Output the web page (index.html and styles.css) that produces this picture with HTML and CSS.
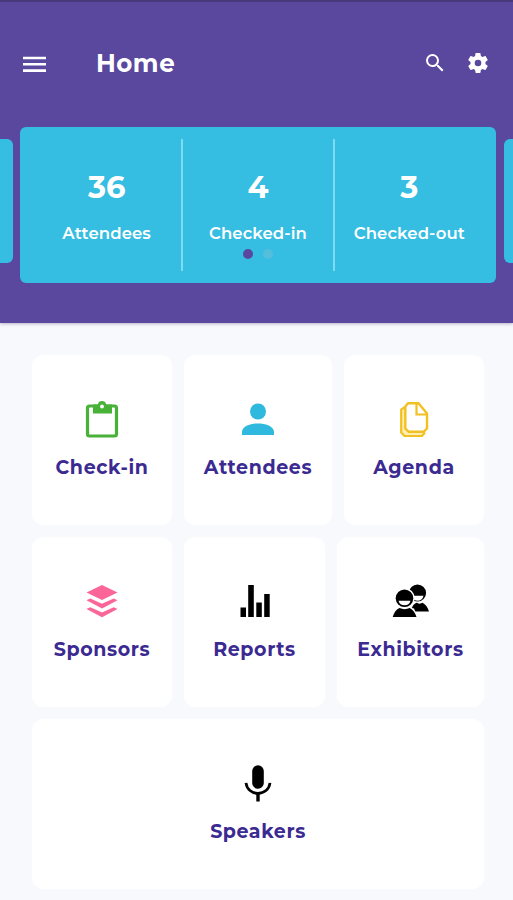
FILE: index.html
```
<!DOCTYPE html>
<html lang="en">

<head>
    <meta charset="utf-8">
    <meta name="viewport" content="width=device-width, initial-scale=1">
    <title>Home</title>
    <link rel="stylesheet" href="styles.css">
</head>

<body>
    <header class="header">
        <div class="toolbar">
            <svg class="icon-menu" width="23" height="17" viewBox="0 0 23 17">
                <path d="M0 2h23M0 8.3h23M0 14.6h23" fill="none" stroke="#fff" stroke-width="2.6" />
            </svg>
            <h1 class="title">Home</h1>
            <svg class="icon-search" width="24" height="24" viewBox="0 0 24 24">
                <path d="M15.5 14h-.79l-.28-.27A6.471 6.471 0 0 0 16 9.5 6.5 6.5 0 1 0 9.5 16c1.61 0 3.09-.59 4.23-1.57l.27.28v.79l5 4.99L20.49 19l-4.99-5zm-6 0C7.01 14 5 11.99 5 9.5S7.01 5 9.5 5 14 7.01 14 9.5 11.99 14 9.5 14z" fill="#fff" />
            </svg>
            <svg class="icon-settings" width="24" height="24" viewBox="0 0 24 24">
                <path d="M19.43 12.98c.04-.32.07-.64.07-.98s-.03-.66-.07-.98l2.11-1.65c.19-.15.24-.42.12-.64l-2-3.46c-.12-.22-.39-.3-.61-.22l-2.49 1c-.52-.4-1.08-.73-1.69-.98l-.38-2.65A.488.488 0 0 0 14 2h-4c-.25 0-.46.18-.49.42l-.38 2.65c-.61.25-1.17.59-1.69.98l-2.49-1c-.23-.09-.49 0-.61.22l-2 3.46c-.13.22-.07.49.12.64l2.11 1.65c-.04.32-.07.65-.07.98s.03.66.07.98l-2.11 1.65c-.19.15-.24.42-.12.64l2 3.46c.12.22.39.3.61.22l2.49-1c.52.4 1.08.73 1.69.98l.38 2.65c.03.24.24.42.49.42h4c.25 0 .46-.18.49-.42l.38-2.65c.61-.25 1.17-.59 1.69-.98l2.49 1c.23.09.49 0 .61-.22l2-3.46c.12-.22.07-.49-.12-.64l-2.11-1.65zM12 15.300a3.300 3.300 0 1 1 0-6.600 3.300 3.300 0 0 1 0 6.600z" fill="#fff" />
            </svg>
        </div>

        <div class="carousel">
            <div class="peek peek-left"></div>
            <div class="stats">
                <div class="stat">
                    <div class="stat-value">36</div>
                    <div class="stat-label">Attendees</div>
                </div>
                <div class="stat">
                    <div class="stat-value">4</div>
                    <div class="stat-label">Checked-in</div>
                </div>
                <div class="stat">
                    <div class="stat-value">3</div>
                    <div class="stat-label">Checked-out</div>
                </div>
                <div class="dots">
                    <span class="dot active"></span>
                    <span class="dot"></span>
                </div>
            </div>
            <div class="peek peek-right"></div>
        </div>
    </header>

    <main class="menu">
        <div class="row row-first">
            <a class="tile">
                <svg class="tile-icon" width="40" height="40" viewBox="0 0 40 40">
                    <rect x="5.500" y="7" width="29" height="30" rx="2" fill="none" stroke="#48b238" stroke-width="3.200" />
                    <path d="M11 5.500h4.800a4.300 4.300 0 0 1 8.400 0H30v9H11z" fill="#48b238" />
                    <circle cx="20" cy="7.500" r="1.900" fill="#fff" />
                </svg>
                <span class="tile-label">Check-in</span>
            </a>
            <a class="tile">
                <svg class="tile-icon" width="40" height="40" viewBox="0 0 40 40">
                    <circle cx="20" cy="12.500" r="8" fill="#2fb9de" />
                    <path d="M4 36v-3c0-6 9-8.500 16-8.500S36 27 36 33v3z" fill="#2fb9de" />
                </svg>
                <span class="tile-label">Attendees</span>
            </a>
            <a class="tile">
                <svg class="tile-icon" width="40" height="40" viewBox="0 0 40 40">
                    <path d="M11 8 7.200 10.500v23l3.300 3.500h17.500l3-3.500" fill="#fff0b0" stroke="#f2c022" stroke-width="2.200" />
                    <path d="M14 4.300h10.500L33 14.500V29.500l-3.200 3.200H14.500l-3.200-3.200V7.500z" fill="#fff" stroke="#f2c022" stroke-width="2.400" stroke-linejoin="round" />
                    <path d="M22.500 4.500v11H33" fill="none" stroke="#f2c022" stroke-width="2.200" />
                </svg>
                <span class="tile-label">Agenda</span>
            </a>
        </div>

        <div class="row row-second">
            <a class="tile">
                <svg class="tile-icon" width="40" height="40" viewBox="0 0 40 40">
                    <g fill="#fb6597">
                        <path d="M20 4l15.500 7.500L20 19 4.500 11.500z" />
                        <path d="M4.500 19.300l3.800-1.800L20 22.800l11.700-5.300 3.800 1.800L20 27.500z" />
                        <path d="M4.500 28l3.800-1.800L20 31.500l11.700-5.300 3.800 1.800L20 36.200z" />
                    </g>
                </svg>
                <span class="tile-label">Sponsors</span>
            </a>
            <a class="tile">
                <svg class="tile-icon" width="40" height="40" viewBox="0 0 40 40">
                    <path d="M5.500 26.500h5.500V36H5.500zM13.200 4h5.600v32h-5.600zM21.300 21.500h5.500V36h-5.500zM29.200 13h5.500v23h-5.500z" />
                </svg>
                <span class="tile-label">Reports</span>
            </a>
            <a class="tile">
                <svg class="tile-icon" width="40" height="40" viewBox="0 0 40 40">
                    <circle cx="26.500" cy="12" r="8.600" />
                    <path d="M21 14.800h11.500c-.6 3.400-3 5-5.800 5s-5.200-1.600-5.700-5z" fill="#fff" />
                    <path d="M20 30.500c1-6 3.500-8.200 6-8.700 1.800 1.200 4 1 5.500 0 3 1.500 5.200 4.500 6.500 8.700z" />
                    <circle cx="13.500" cy="17.300" r="10.300" fill="#fff" />
                    <path d="M0 37.500l4-10 10-2 9 2 4 10z" fill="#fff" />
                    <circle cx="13.500" cy="17.300" r="8.800" />
                    <path d="M7.500 19.800h12c-.6 3.200-3 4.400-6 4.400s-5.400-1.200-6-4.400z" fill="#fff" />
                    <path d="M1.700 36c1.200-4.500 3.700-7.700 6.800-9 3.200 1.500 7 1.500 10.200 0 3.200 1.500 5.500 4.500 6.800 9z" />
                </svg>
                <span class="tile-label">Exhibitors</span>
            </a>
        </div>

        <div class="row">
            <a class="tile">
                <svg class="tile-icon" width="40" height="40" viewBox="0 0 40 40">
                    <rect x="14.200" y="2.300" width="11.600" height="23.500" rx="5.800" />
                    <path d="M8 19.800c.8 6.500 5.800 10.500 12 10.500s11.200-4 12-10.500" fill="none" stroke="#000" stroke-width="2.700" />
                    <path d="M20 30v8.500" stroke="#000" stroke-width="3.400" />
                </svg>
                <span class="tile-label">Speakers</span>
            </a>
        </div>
    </main>
</body>

</html>
```
FILE: styles.css
```
* {
    box-sizing: border-box;
}

body {
    margin: 0;
    height: 900px;
    overflow: hidden;
    background: #f7f9fd;
    font-family: Montserrat, Inter, sans-serif;
}

.header {
    height: 323px;
    background: #59489e;
    border-top: 2px solid #46397c;
    box-shadow: 0 1px 3px rgba(70, 50, 110, 0.35);
}

.toolbar {
    display: flex;
    align-items: center;
    height: 125px;
    padding: 0 23px 3px;
}

.icon-menu {
    margin-top: 2px;
}

.title {
    flex: 1;
    margin: 0 0 0 50px;
    color: #fff;
    font-size: 24.5px;
    line-height: 30px;
    font-weight: 700;
    letter-spacing: 0.5px;
}

.icon-search {
    margin-right: 19px;
}

/* carousel with the neighbour slides peeking in */
.carousel {
    display: flex;
    height: 156px;
}

.peek {
    height: 124px;
    margin-top: 12px;
    background: #35bde2;
}

.peek-left {
    width: 13px;
    border-radius: 0 6px 6px 0;
}

.peek-right {
    width: 9px;
    border-radius: 6px 0 0 6px;
}

.stats {
    position: relative;
    display: flex;
    flex: 1;
    margin: 0 8px 0 7px;
    padding: 12px;
    border-radius: 6px;
    background: #35bde2;
}

.stat {
    flex: 1;
    height: 132px;
    padding-top: 30px;
    color: #fff;
    text-align: center;
    white-space: nowrap;
}

.stat + .stat {
    border-left: 2px solid #7bdcf2;
}

.stat-value {
    font-size: 30.5px;
    line-height: 36px;
    font-weight: 700;
}

.stat-label {
    margin-top: 18px;
    font-size: 16.5px;
    line-height: 20px;
    font-weight: 600;
    letter-spacing: 0.1px;
}

.dots {
    position: absolute;
    left: 0;
    right: 0;
    top: 122px;
    display: flex;
    justify-content: center;
    gap: 10px;
}

.dot {
    width: 10px;
    height: 10px;
    border-radius: 50%;
    background: #54bfdd;
}

.dot.active {
    background: #59489e;
}

.menu {
    display: grid;
    gap: 12px;
    padding: 32px 29px 0 32px;
}

.row {
    display: grid;
    gap: 12px;
}

.row-first {
    grid-template-columns: 140fr 148fr 140fr;
}

.row-second {
    grid-template-columns: 140fr 141fr 147fr;
}

.tile {
    display: flex;
    flex-direction: column;
    align-items: center;
    height: 170px;
    padding-top: 44px;
    border-radius: 12px;
    background: #fff;
    box-shadow: 0 0 3px rgba(255, 255, 255, 0.8);
}

.tile-label {
    margin-top: 17px;
    color: #3b2a91;
    font-size: 19px;
    line-height: 24px;
    font-weight: 700;
    letter-spacing: 0.6px;
}
```
